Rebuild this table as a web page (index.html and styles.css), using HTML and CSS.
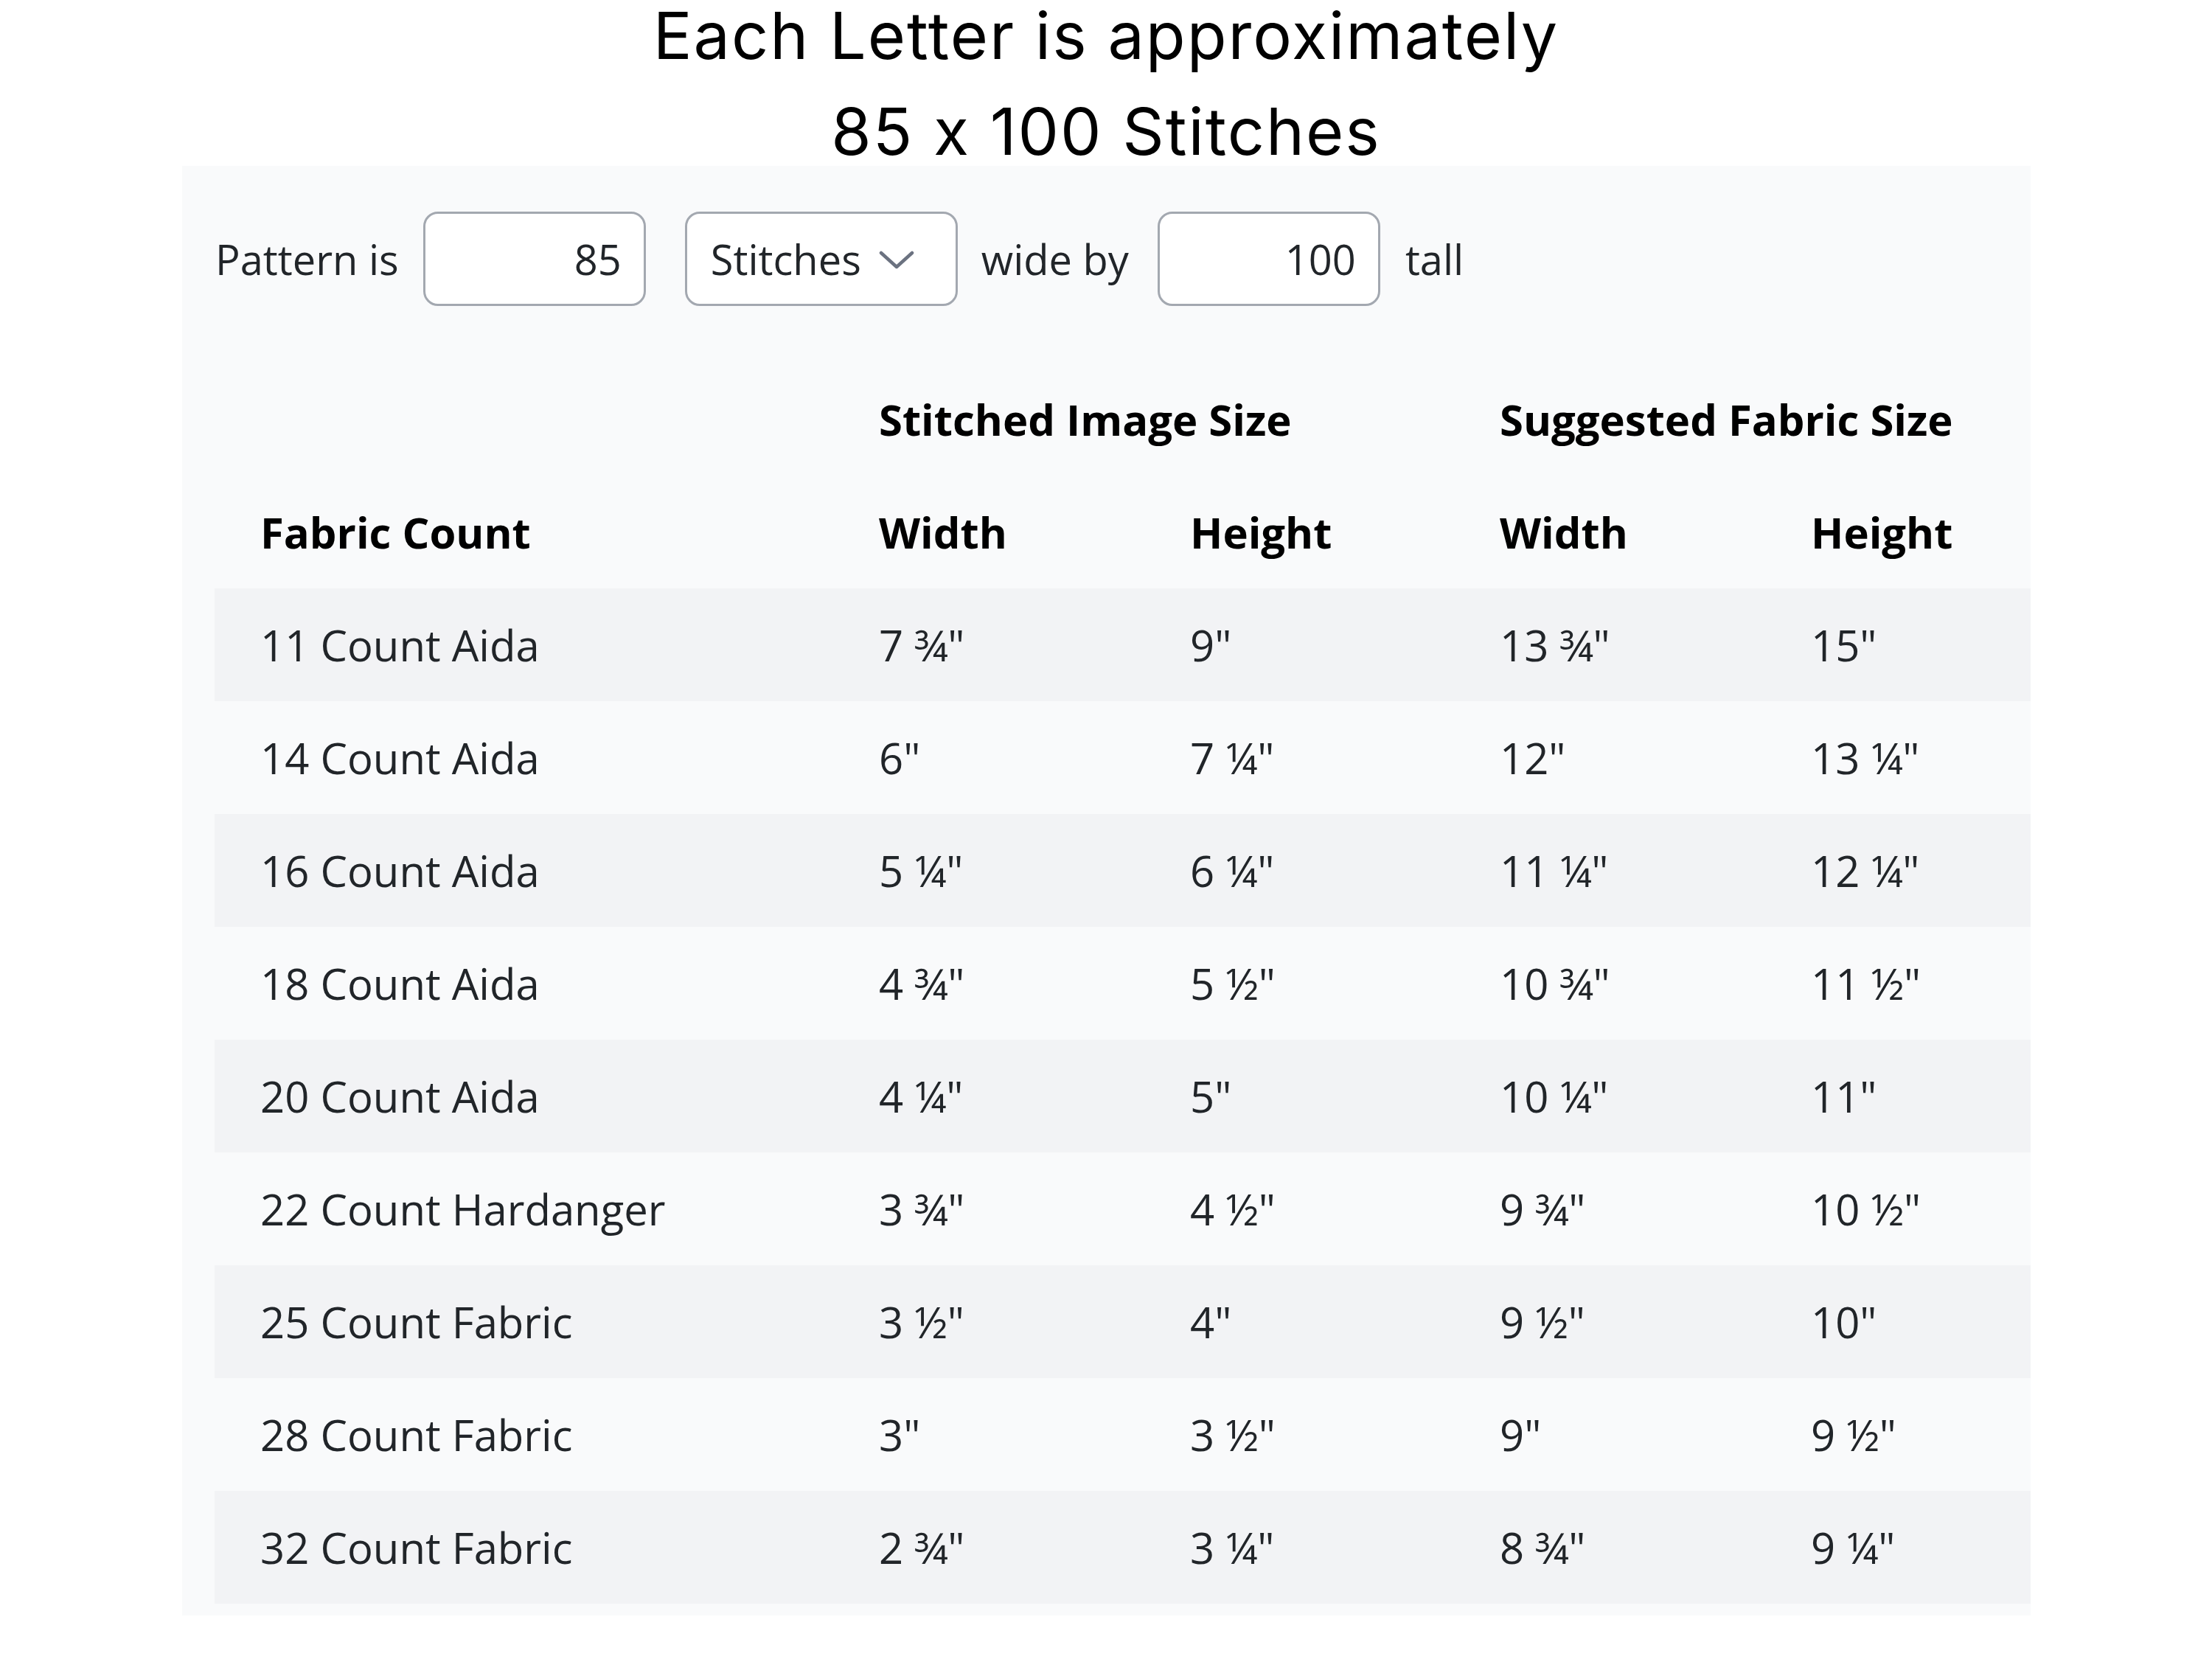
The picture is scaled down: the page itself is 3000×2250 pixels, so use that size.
FILE: index.html
```html
<!DOCTYPE html>
<html lang="en">
<head>
<meta charset="utf-8">
<title>Fabric size calculator</title>
<link rel="stylesheet" href="styles.css">
</head>
<body>
<h1 class="title">Each Letter is approximately<br>85 x 100 Stitches</h1>
<section class="panel">
  <div class="controls">
    <span class="label">Pattern is</span>
    <div class="box">85</div>
    <div class="select"><span>Stitches</span>
      <svg class="chev" width="48" height="26" viewBox="0 0 48 26"><polyline points="3,3 24,22 45,3" fill="none" stroke="#6b7280" stroke-width="4.5" stroke-linecap="round" stroke-linejoin="round"/></svg>
    </div>
    <span class="label wide">wide by</span>
    <div class="box">100</div>
    <span class="label">tall</span>
  </div>
  <table class="sizes">
    <colgroup>
      <col class="c1"><col class="c2"><col class="c3"><col class="c4"><col class="c5">
    </colgroup>
    <thead>
      <tr><th></th><th colspan="2">Stitched Image Size</th><th colspan="2">Suggested Fabric Size</th></tr>
      <tr><th>Fabric Count</th><th>Width</th><th>Height</th><th>Width</th><th>Height</th></tr>
    </thead>
    <tbody>
      <tr><td>11 Count Aida</td><td>7 ¾"</td><td>9"</td><td>13 ¾"</td><td>15"</td></tr>
      <tr><td>14 Count Aida</td><td>6"</td><td>7 ¼"</td><td>12"</td><td>13 ¼"</td></tr>
      <tr><td>16 Count Aida</td><td>5 ¼"</td><td>6 ¼"</td><td>11 ¼"</td><td>12 ¼"</td></tr>
      <tr><td>18 Count Aida</td><td>4 ¾"</td><td>5 ½"</td><td>10 ¾"</td><td>11 ½"</td></tr>
      <tr><td>20 Count Aida</td><td>4 ¼"</td><td>5"</td><td>10 ¼"</td><td>11"</td></tr>
      <tr><td>22 Count Hardanger</td><td>3 ¾"</td><td>4 ½"</td><td>9 ¾"</td><td>10 ½"</td></tr>
      <tr><td>25 Count Fabric</td><td>3 ½"</td><td>4"</td><td>9 ½"</td><td>10"</td></tr>
      <tr><td>28 Count Fabric</td><td>3"</td><td>3 ½"</td><td>9"</td><td>9 ½"</td></tr>
      <tr><td>32 Count Fabric</td><td>2 ¾"</td><td>3 ¼"</td><td>8 ¾"</td><td>9 ¼"</td></tr>
    </tbody>
  </table>
</section>
</body>
</html>
```

FILE: styles.css
```css
html, body {
  margin: 0;
  padding: 0;
  background: #ffffff;
}

body {
  font-family: "Open Sans", "Noto Sans", sans-serif;
  color: #212529;
}

.title {
  margin: -17px 0 0;
  height: 242px;
  font-family: Inter, "Liberation Sans", sans-serif;
  font-weight: 400;
  font-size: 88px;
  line-height: 130px;
  letter-spacing: 2px;
  font-feature-settings: "calt" 0;
  text-align: center;
  color: #000000;
}

.panel {
  margin: 0 246px 0 247px;
  background: #f9fafb;
  padding: 62px 0 16px 44px;
}

.controls {
  display: flex;
  align-items: center;
  height: 128px;
  font-size: 56px;
  color: #212529;
}

.label {
  margin: 0 33px 0 1px;
  line-height: 1;
}

.label.wide {
  margin-right: 39px;
}

.box {
  box-sizing: border-box;
  width: 302px;
  height: 128px;
  border: 3px solid #a3a8b0;
  border-radius: 20px;
  background: #ffffff;
  display: flex;
  align-items: center;
  justify-content: flex-end;
  padding-right: 30px;
  margin-right: 33px;
}

.controls .box:first-of-type {
  margin-right: 53px;
}

.select {
  box-sizing: border-box;
  width: 370px;
  height: 128px;
  border: 3px solid #a3a8b0;
  border-radius: 20px;
  background: #ffffff;
  display: flex;
  align-items: center;
  padding-left: 32px;
  margin-right: 31px;
}

.chev {
  margin-left: 24px;
  margin-top: 4px;
}

.sizes {
  margin-top: 77px;
  width: 2463px;
  border-collapse: collapse;
  border-spacing: 0;
  table-layout: fixed;
  font-size: 58px;
}

.c1 { width: 839px; }
.c2 { width: 422px; }
.c3 { width: 420px; }
.c4 { width: 422px; }
.c5 { width: 360px; }

.sizes th,
.sizes td {
  height: 153px;
  padding: 0 0 0 62px;
  text-align: left;
  vertical-align: middle;
  white-space: nowrap;
}

.sizes th {
  font-weight: 700;
  color: #000000;
}

.sizes td {
  font-weight: 400;
  color: #212529;
}

.sizes tbody tr:nth-child(odd) {
  background: #f2f3f5;
}
```
